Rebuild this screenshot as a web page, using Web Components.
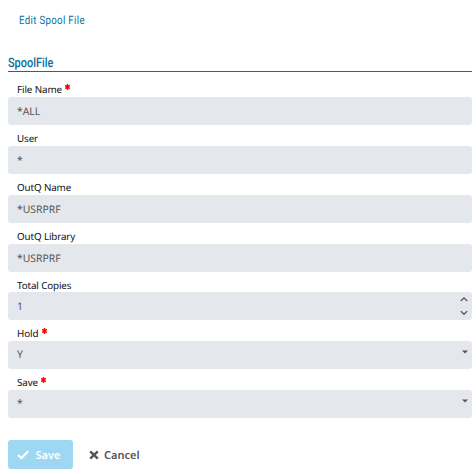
<!DOCTYPE html>
<html lang="en"><head><meta charset="utf-8"><title>Edit Spool File</title>
<style>html,body{margin:0;background:#fff}body{height:474px;overflow:hidden;text-rendering:geometricPrecision}</style></head><body>
<spool-form></spool-form>
<script>
class BaseElement extends HTMLElement{
  connectedCallback(){ if(!this.shadowRoot) this.attachShadow({mode:'open'}).innerHTML=this.render(); }
}
customElements.define('form-heading',class extends BaseElement{
  render(){return `<style>
  :host{display:block;font-family:Roboto,"Liberation Sans",sans-serif;color:#0870a0}
  .crumb{height:41px;padding-left:19px;font-size:11.5px;line-height:41px;letter-spacing:.4px}
  h2{margin:14px 4px 0 8px;height:16px;border-bottom:1px solid #0870a0;font-size:13px;font-weight:500;line-height:17px}
  span{display:inline-block;transform-origin:0 50%;white-space:nowrap}
  .crumb span{transform:scaleX(.84)}h2 span{transform:scaleX(.84)}
  </style><div class="crumb"><span>Edit Spool File</span></div><h2><span>SpoolFile</span></h2>`}
});
customElements.define('required-mark',class extends BaseElement{
  render(){return `<style>:host{display:block;width:5px;height:6px;margin:0 0 6px 3.5px}svg{display:block}</style>
  <svg width="5" height="6" viewBox="0 0 5 6"><path d="M2.5 0V6M.2 1.4L4.8 4.6M4.8 1.4L.2 4.6" stroke="#f00" stroke-width="1.45"/></svg>`}
});
customElements.define('form-field',class extends BaseElement{
  render(){
    const k=this.getAttribute('kind');
    const icon=k==='number'?`<svg width="8" height="20" viewBox="0 0 8 20" fill="none" stroke="#555" stroke-width="1.3"><path d="M.8 5L4 1.8L7.2 5M.8 15.1L4 18.3L7.2 15.1"/></svg>`
      :k==='select'?`<svg width="6" height="4" viewBox="0 0 6 4"><path d="M0 .5H6L3 3.5Z" fill="#555"/></svg>`:'';
    return `<style>
    :host{display:block;font-family:"Noto Sans","Open Sans",sans-serif}
    .label{display:flex;align-items:center;height:21px;box-sizing:border-box;padding:6px 0 0 9px;font-size:9.8px;line-height:15px;color:#111}
    .label.number{height:20px}
    .label span{letter-spacing:-.11px}
    .box{display:flex;align-items:center;justify-content:space-between;height:28px;box-sizing:border-box;padding:3px 4px 0 9px;border-radius:3px;background:#e4e7eb;color:#555;font-size:10.4px;line-height:15px}
    .box.number svg{margin-top:-3px}
    .box.select{padding-top:2px;padding-bottom:1px}
    .box.select svg{margin:-7px 0 0 0}
    </style><div class="label ${k||''}"><span>${this.getAttribute('label')}</span>${this.hasAttribute('required')?'<required-mark></required-mark>':''}</div>
    <div class="box ${k||''}"><slot></slot>${icon}</div>`}
});
customElements.define('action-button',class extends BaseElement{
  render(){
    const save=this.getAttribute('kind')==='save';
    return `<style>
    :host{display:block}
    button{display:flex;align-items:center;gap:${save?6.5:5.5}px;width:${save?65:70}px;height:29px;padding:0 0 0 ${save?9:15.5}px;border:0;border-radius:3px;background:${save?'#9dd7f2':'transparent'};color:${save?'#fff':'#555'};font:600 11px/15px "Noto Sans","Open Sans",sans-serif;white-space:nowrap;text-rendering:geometricPrecision}
    svg{flex:none;display:block}
    span{padding-top:1px}
    </style><button type="button">${save?
    '<svg width="12" height="10" viewBox="0 0 12 10" fill="none" stroke="#fff" stroke-width="2.3"><path d="M.9 5L4.3 8.2L11.1 1.3"/></svg>':
    '<svg width="10" height="10" viewBox="0 0 10 10" fill="none" stroke="#555" stroke-width="2.5"><path d="M1.2 1.4L8.8 8.6M8.8 1.4L1.2 8.6"/></svg>'}<span><slot></slot></span></button>`}
});
customElements.define('spool-form',class extends BaseElement{
  render(){return `<style>
  :host{display:block;width:476px}
  .fields{margin:4px 4px 0 8px}
  .actions{display:flex;margin:22px 0 0 8px}
  </style><form-heading></form-heading><div class="fields">
  <form-field label="File Name" required>*ALL</form-field>
  <form-field label="User">*</form-field>
  <form-field label="OutQ Name">*USRPRF</form-field>
  <form-field label="OutQ Library">*USRPRF</form-field>
  <form-field label="Total Copies" kind="number">1</form-field>
  <form-field label="Hold" required kind="select">Y</form-field>
  <form-field label="Save" required kind="select">*</form-field>
  </div><div class="actions"><action-button kind="save">Save</action-button><action-button kind="cancel">Cancel</action-button></div>`}
});
</script></body></html>
